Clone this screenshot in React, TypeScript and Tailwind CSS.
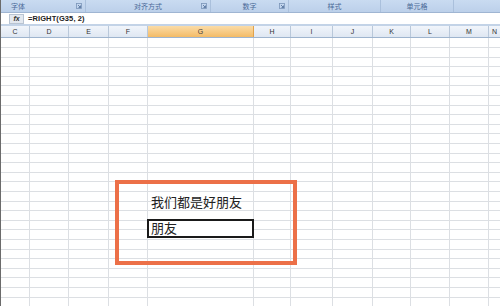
import React from 'react';

const groups = [
  { label: '字体', width: 'w-[85px]', align: 'justify-start pl-[10px]', launcher: true },
  { label: '对齐方式', width: 'w-[125px]', align: 'justify-center', launcher: true },
  { label: '数字', width: 'w-[78px]', align: 'justify-center', launcher: true },
  { label: '样式', width: 'w-[92px]', align: 'justify-center', launcher: false },
  { label: '单元格', width: 'w-[73px]', align: 'justify-center', launcher: false },
];

const columns = [
  { name: 'C', width: 'w-[29px]' },
  { name: 'D', width: 'w-[39px]' },
  { name: 'E', width: 'w-[40px]' },
  { name: 'F', width: 'w-[39px]' },
  { name: 'G', width: 'w-[106px]', active: true },
  { name: 'H', width: 'w-[37px]' },
  { name: 'I', width: 'w-[42px]' },
  { name: 'J', width: 'w-[40px]' },
  { name: 'K', width: 'w-[38px]' },
  { name: 'L', width: 'w-[39px]' },
  { name: 'M', width: 'w-[39px]' },
  { name: 'N', width: 'w-[12px]' },
];

// 9.6px average row height, like the scaled screenshot
const rowHeights = Array.from({ length: 28 }, (_, i) => [10, 10, 9, 10, 9][i % 5]);

function Launcher() {
  return (
    <svg width="6" height="6" viewBox="0 0 6 6" className="absolute right-[3px] top-[3px]">
      <rect x="0.5" y="0.5" width="5" height="5" fill="none" stroke="#7b95b8" strokeWidth="0.8" />
      <path d="M2 2 L4.5 4.5 M4.5 2.5 V4.5 H2.5" stroke="#4d6b95" strokeWidth="0.8" fill="none" />
    </svg>
  );
}

export default function App() {
  return (
    <div
      className="w-[500px] h-[306px] overflow-hidden bg-white flex flex-col border-l border-[#6b6b6b]"
      style={{ fontFamily: '"Liberation Sans", "Noto Sans CJK SC", sans-serif' }}
    >
      {/* ribbon group labels */}
      <div className="h-[13px] flex shrink-0 bg-gradient-to-b from-[#c9dbf1] to-[#bcd0ea] border-b border-[#9fb5d2]">
        {groups.map((g) => (
          <div
            key={g.label}
            className={`${g.width} relative flex items-center ${g.align} border-r border-[#aac0dc] text-[7px] leading-none text-[#4a6a98]`}
          >
            {g.label}
            {g.launcher && <Launcher />}
          </div>
        ))}
        <div className="flex-1" />
      </div>

      {/* formula bar */}
      <div className="h-[13px] flex items-center shrink-0 bg-white border-b-2 border-[#c3d3e7]">
        <div className="ml-[8px] w-[15px] h-[10px] flex items-center justify-center bg-[#e3e8ef] border border-[#b9c4d2] text-[7px] italic font-bold text-[#333] leading-none">
          fx
        </div>
        <div className="ml-[4px] text-[7.5px] font-bold text-[#222] leading-none tracking-[0.1px]">=RIGHT(G35, 2)</div>
      </div>

      {/* column headers */}
      <div className="h-[12px] flex shrink-0 border-b border-[#9eb4ce]">
        {columns.map((c) => (
          <div
            key={c.name}
            className={`${c.width} shrink-0 flex items-center justify-center border-r text-[7px] leading-none ${
              c.active
                ? 'bg-gradient-to-b from-[#fbdca6] to-[#f3bb66] border-[#e0a24c] text-[#3c3c3c]'
                : 'bg-gradient-to-b from-[#f1f5fb] to-[#dfe7f2] border-[#b9c8da] text-[#333]'
            }`}
          >
            {c.name}
          </div>
        ))}
      </div>

      {/* cells */}
      <div className="relative flex-1">
        {rowHeights.map((h, r) => (
          <div key={r} className={`flex ${h === 10 ? 'h-[10px]' : 'h-[9px]'}`}>
            {columns.map((c) => (
              <div key={c.name} className={`${c.width} shrink-0 border-r border-b border-[#dcdfe3]`} />
            ))}
          </div>
        ))}

        {/* cell contents */}
        <div className="absolute left-[150px] top-[158px] text-[13px] leading-none text-[#222]">我们都是好朋友</div>
        <div className="absolute left-[146px] top-[181px] w-[107px] h-[19px] border-2 border-[#1a1a1a] bg-white flex items-center pl-[2px] text-[13px] leading-none text-[#222]">
          朋友
        </div>

        {/* annotation frame */}
        <div className="absolute left-[114px] top-[142px] w-[182px] h-[85px] border-[4px] border-[#ec7048]" />
      </div>
    </div>
  );
}
